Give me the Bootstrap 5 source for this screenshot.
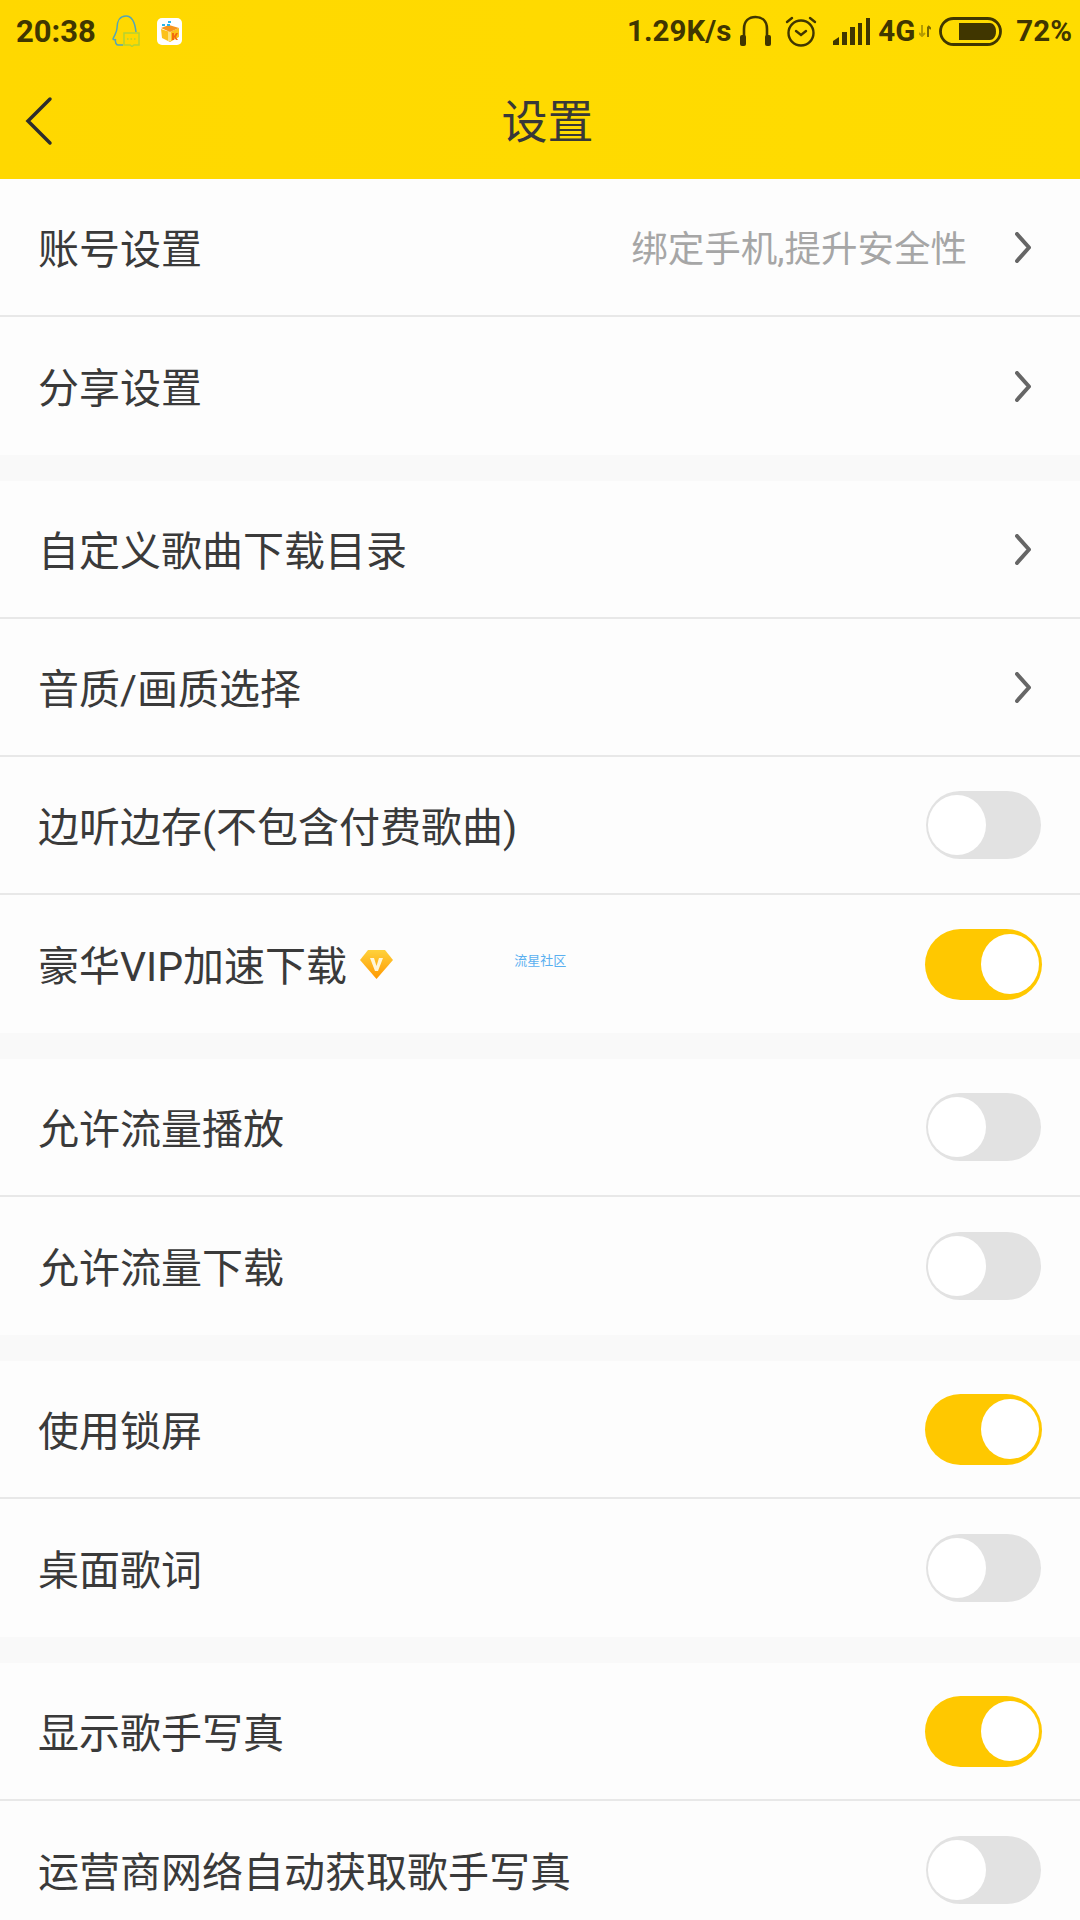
<!DOCTYPE html>
<html lang="zh-CN">
<head>
  <meta charset="UTF-8" />
  <title>设置</title>
  <meta name="viewport" content="width=device-width, initial-scale=1" />
  <link href="https://cdn.jsdelivr.net/npm/bootstrap@5.3.0/dist/css/bootstrap.min.css" rel="stylesheet" />
  <style>
    body {
      background: #f9f9f9;
      font-family: Roboto, "Noto Sans CJK SC", sans-serif;
      color: #333;
      height: 1920px;
      overflow: hidden;
    }
    .top-bar {
      height: 179px;
      background: linear-gradient(90deg, #ffd800, #ffdc00);
    }
    .status-row {
      height: 62px;
      padding: 0 8px 0 16px;
      color: #403600;
      font-size: 31px;
      font-weight: 700;
      line-height: 1;
    }
    .speed-text { font-size: 29.5px; padding-top: 1px; }
    .alarm-svg { margin-left: 13px; }
    .pct-text { margin-left: 14px; }
    .title-row {
      height: 117px;
      padding: 0 10px 0 25px;
      display: grid;
      grid-template-columns: 1fr auto 1fr;
      align-items: center;
    }
    .page-title {
      font-size: 46px;
      font-weight: 400;
      margin: 0;
      padding-top: 3px;
      line-height: 1;
      color: #383838;
    }
    .group-box { margin-bottom: 26px; }
    .group-box .list-group-item {
      height: 138px;
      padding: 0 39px 0 38px;
      background: #fdfdfd;
      border-color: #e8e8e8;
      border-width: 0 0 2px;
      color: #3a3a3a;
      font-size: 41px;
      font-weight: 400;
      display: flex;
      align-items: center;
    }
    .group-box .list-group-item > span { padding-top: 7px; }
    .group-box .list-group-item > .hint-text {
      font-size: 36.5px;
      color: #a6a6a6;
      margin-right: 48px;
    }
    .group-box .list-group-item > .mark-text {
      font-size: 13px;
      color: #5ab0f0;
      margin-left: 121px;
      padding-top: 0;
      margin-bottom: 7px;
    }
    .arrow-svg { margin-right: 10px; }
    .vip-svg { margin-left: 13px; }
    .sw-off, .sw-on { display: flex; align-items: center; border-radius: 40px; }
    .sw-off {
      width: 115px;
      height: 68px;
      background: #e2e2e2;
      padding-left: 2px;
    }
    .sw-on {
      width: 117px;
      height: 71px;
      background: #ffc800;
      justify-content: flex-end;
      padding-right: 3px;
      margin-right: -1px;
    }
    .sw-knob { width: 58px; height: 60px; border-radius: 50%; background: #fff; }
  </style>
</head>
<body>
  <header class="top-bar">
    <div class="status-row d-flex align-items-center">
      <span>20:38</span>
      <svg class="ms-3" width="29" height="32" viewBox="0 0 29 32" fill="none">
        <path d="M24 17C23 8 20 1 14 1 8 1 5 6 5 13 5 17 3 19 1 24c1 1 2 1 2.500 0C3 27 4 30 6 30h5" stroke="#55a5b5" stroke-width="1.500"/>
        <path d="M12 18h15v12h-5l-2 1.500-2-1.500h-6z" stroke="#b5d232" stroke-width="1.500"/>
        <path d="M15 24h1.500m2 0h1.500m2 0h1.500" stroke="#b5d232" stroke-width="1.500"/>
      </svg>
      <svg class="ms-3" width="25" height="27" viewBox="0 0 25 27">
        <rect width="25" height="27" rx="5" fill="#fff"/>
        <path d="M4 11l9 3 9-4v9l-9 5-8-4z" fill="#fcc11c"/>
        <path d="M4 10l8-3 10 3-9 4z" fill="#f7941d"/>
        <path d="M11 14h3v9h-3z" fill="#fde07a"/>
        <path d="M15 15h2v3l2-3h2l-2 4 2 3h-2l-2-3v3h-2z" fill="#f26a0f"/>
        <path d="M5 6h3v2H5zm6-3h3v2h-3zm-1 3h3v2h-3z" fill="#2bb5ea"/>
      </svg>
      <span class="speed-text ms-auto">1.29K/s</span>
      <svg class="ms-2" width="33" height="32" viewBox="0 0 33 32" fill="none">
        <path d="M5 24V14C5 6 10 2 16.500 2S28 6 28 14v10" stroke="#403600" stroke-width="2.600"/>
        <rect x="1" y="20" width="6" height="11" rx="2" fill="#403600"/>
        <rect x="26" y="20" width="6" height="11" rx="2" fill="#403600"/>
      </svg>
      <svg class="alarm-svg" width="32" height="32" viewBox="0 0 32 32" fill="none" stroke="#403600" stroke-width="2.400" stroke-linecap="round">
        <circle cx="16" cy="18" r="12.500"/>
        <path d="M11 16l5 4 5-4M2 7l5-4M30 7l-5-4"/>
      </svg>
      <svg class="ms-3" width="37" height="28" viewBox="0 0 37 28" fill="#403600">
        <path d="M0 28v-4l6-4v8zM9 28V15h5v13zM17 28V10h5v18zM25 28V6h4v22zM33 28V1h4v27z"/>
      </svg>
      <span class="speed-text ms-2">4G</span>
      <svg class="ms-1" width="12" height="12" viewBox="0 0 12 12" fill="none" stroke-width="2">
        <path d="M3 0v10M0 8l3 3 3-3" stroke="#b59c00"/>
        <path d="M9 12V2M9 1l3 3" stroke="#7c6b00"/>
      </svg>
      <svg class="ms-2" width="63" height="29" viewBox="0 0 63 29" fill="none">
        <rect x="1.500" y="1.500" width="60" height="26" rx="13" stroke="#403600" stroke-width="2.800"/>
        <path d="M20 6h31c3 0 6 3 6 8.500S54 23 51 23H20z" fill="#403600"/>
      </svg>
      <span class="speed-text pct-text">72%</span>
    </div>
    <div class="title-row">
      <svg width="28" height="50" viewBox="0 0 28 50" fill="none" stroke="#2d2d2d" stroke-width="3.500" stroke-linecap="round">
        <path d="M25 3L3 25l22 22"/>
      </svg>
      <h1 class="page-title">设置</h1>
    </div>
  </header>

  <main>
    <ul class="list-group list-group-flush group-box">
      <li class="list-group-item">
        <span>账号设置</span>
        <span class="hint-text ms-auto">绑定手机,提升安全性</span>
        <svg class="arrow-svg" width="16" height="31" viewBox="0 0 16 31" fill="none" stroke="#666" stroke-width="4" stroke-linecap="round" stroke-linejoin="round"><path d="M2 2l12 13.500L2 29"/></svg>
      </li>
      <li class="list-group-item">
        <span>分享设置</span>
        <svg class="arrow-svg ms-auto" width="16" height="31" viewBox="0 0 16 31" fill="none" stroke="#666" stroke-width="4" stroke-linecap="round" stroke-linejoin="round"><path d="M2 2l12 13.500L2 29"/></svg>
      </li>
    </ul>

    <ul class="list-group list-group-flush group-box">
      <li class="list-group-item">
        <span>自定义歌曲下载目录</span>
        <svg class="arrow-svg ms-auto" width="16" height="31" viewBox="0 0 16 31" fill="none" stroke="#666" stroke-width="4" stroke-linecap="round" stroke-linejoin="round"><path d="M2 2l12 13.500L2 29"/></svg>
      </li>
      <li class="list-group-item">
        <span>音质/画质选择</span>
        <svg class="arrow-svg ms-auto" width="16" height="31" viewBox="0 0 16 31" fill="none" stroke="#666" stroke-width="4" stroke-linecap="round" stroke-linejoin="round"><path d="M2 2l12 13.500L2 29"/></svg>
      </li>
      <li class="list-group-item">
        <span>边听边存(不包含付费歌曲)</span>
        <div class="sw-off ms-auto"><div class="sw-knob"></div></div>
      </li>
      <li class="list-group-item">
        <span>豪华VIP加速下载</span>
        <svg class="vip-svg" width="33" height="31" viewBox="0 0 33 31">
          <defs>
            <linearGradient id="vipFill" x1="0" y1="0" x2="0" y2="1">
              <stop offset="0" stop-color="#ffd23c"/>
              <stop offset="1" stop-color="#ff9800"/>
            </linearGradient>
          </defs>
          <path d="M8 1h17l8 10-16.500 19L0 11z" fill="url(#vipFill)"/>
          <path d="M10 9h4l2.500 8L19 9h4l-5 13h-3z" fill="#fff6d8"/>
        </svg>
        <span class="mark-text">流星社区</span>
        <div class="sw-on ms-auto"><div class="sw-knob"></div></div>
      </li>
    </ul>

    <ul class="list-group list-group-flush group-box">
      <li class="list-group-item">
        <span>允许流量播放</span>
        <div class="sw-off ms-auto"><div class="sw-knob"></div></div>
      </li>
      <li class="list-group-item">
        <span>允许流量下载</span>
        <div class="sw-off ms-auto"><div class="sw-knob"></div></div>
      </li>
    </ul>

    <ul class="list-group list-group-flush group-box">
      <li class="list-group-item">
        <span>使用锁屏</span>
        <div class="sw-on ms-auto"><div class="sw-knob"></div></div>
      </li>
      <li class="list-group-item">
        <span>桌面歌词</span>
        <div class="sw-off ms-auto"><div class="sw-knob"></div></div>
      </li>
    </ul>

    <ul class="list-group list-group-flush group-box">
      <li class="list-group-item">
        <span>显示歌手写真</span>
        <div class="sw-on ms-auto"><div class="sw-knob"></div></div>
      </li>
      <li class="list-group-item">
        <span>运营商网络自动获取歌手写真</span>
        <div class="sw-off ms-auto"><div class="sw-knob"></div></div>
      </li>
    </ul>
  </main>

  <script src="https://cdn.jsdelivr.net/npm/bootstrap@5.3.0/dist/js/bootstrap.bundle.min.js"></script>
</body>
</html>
